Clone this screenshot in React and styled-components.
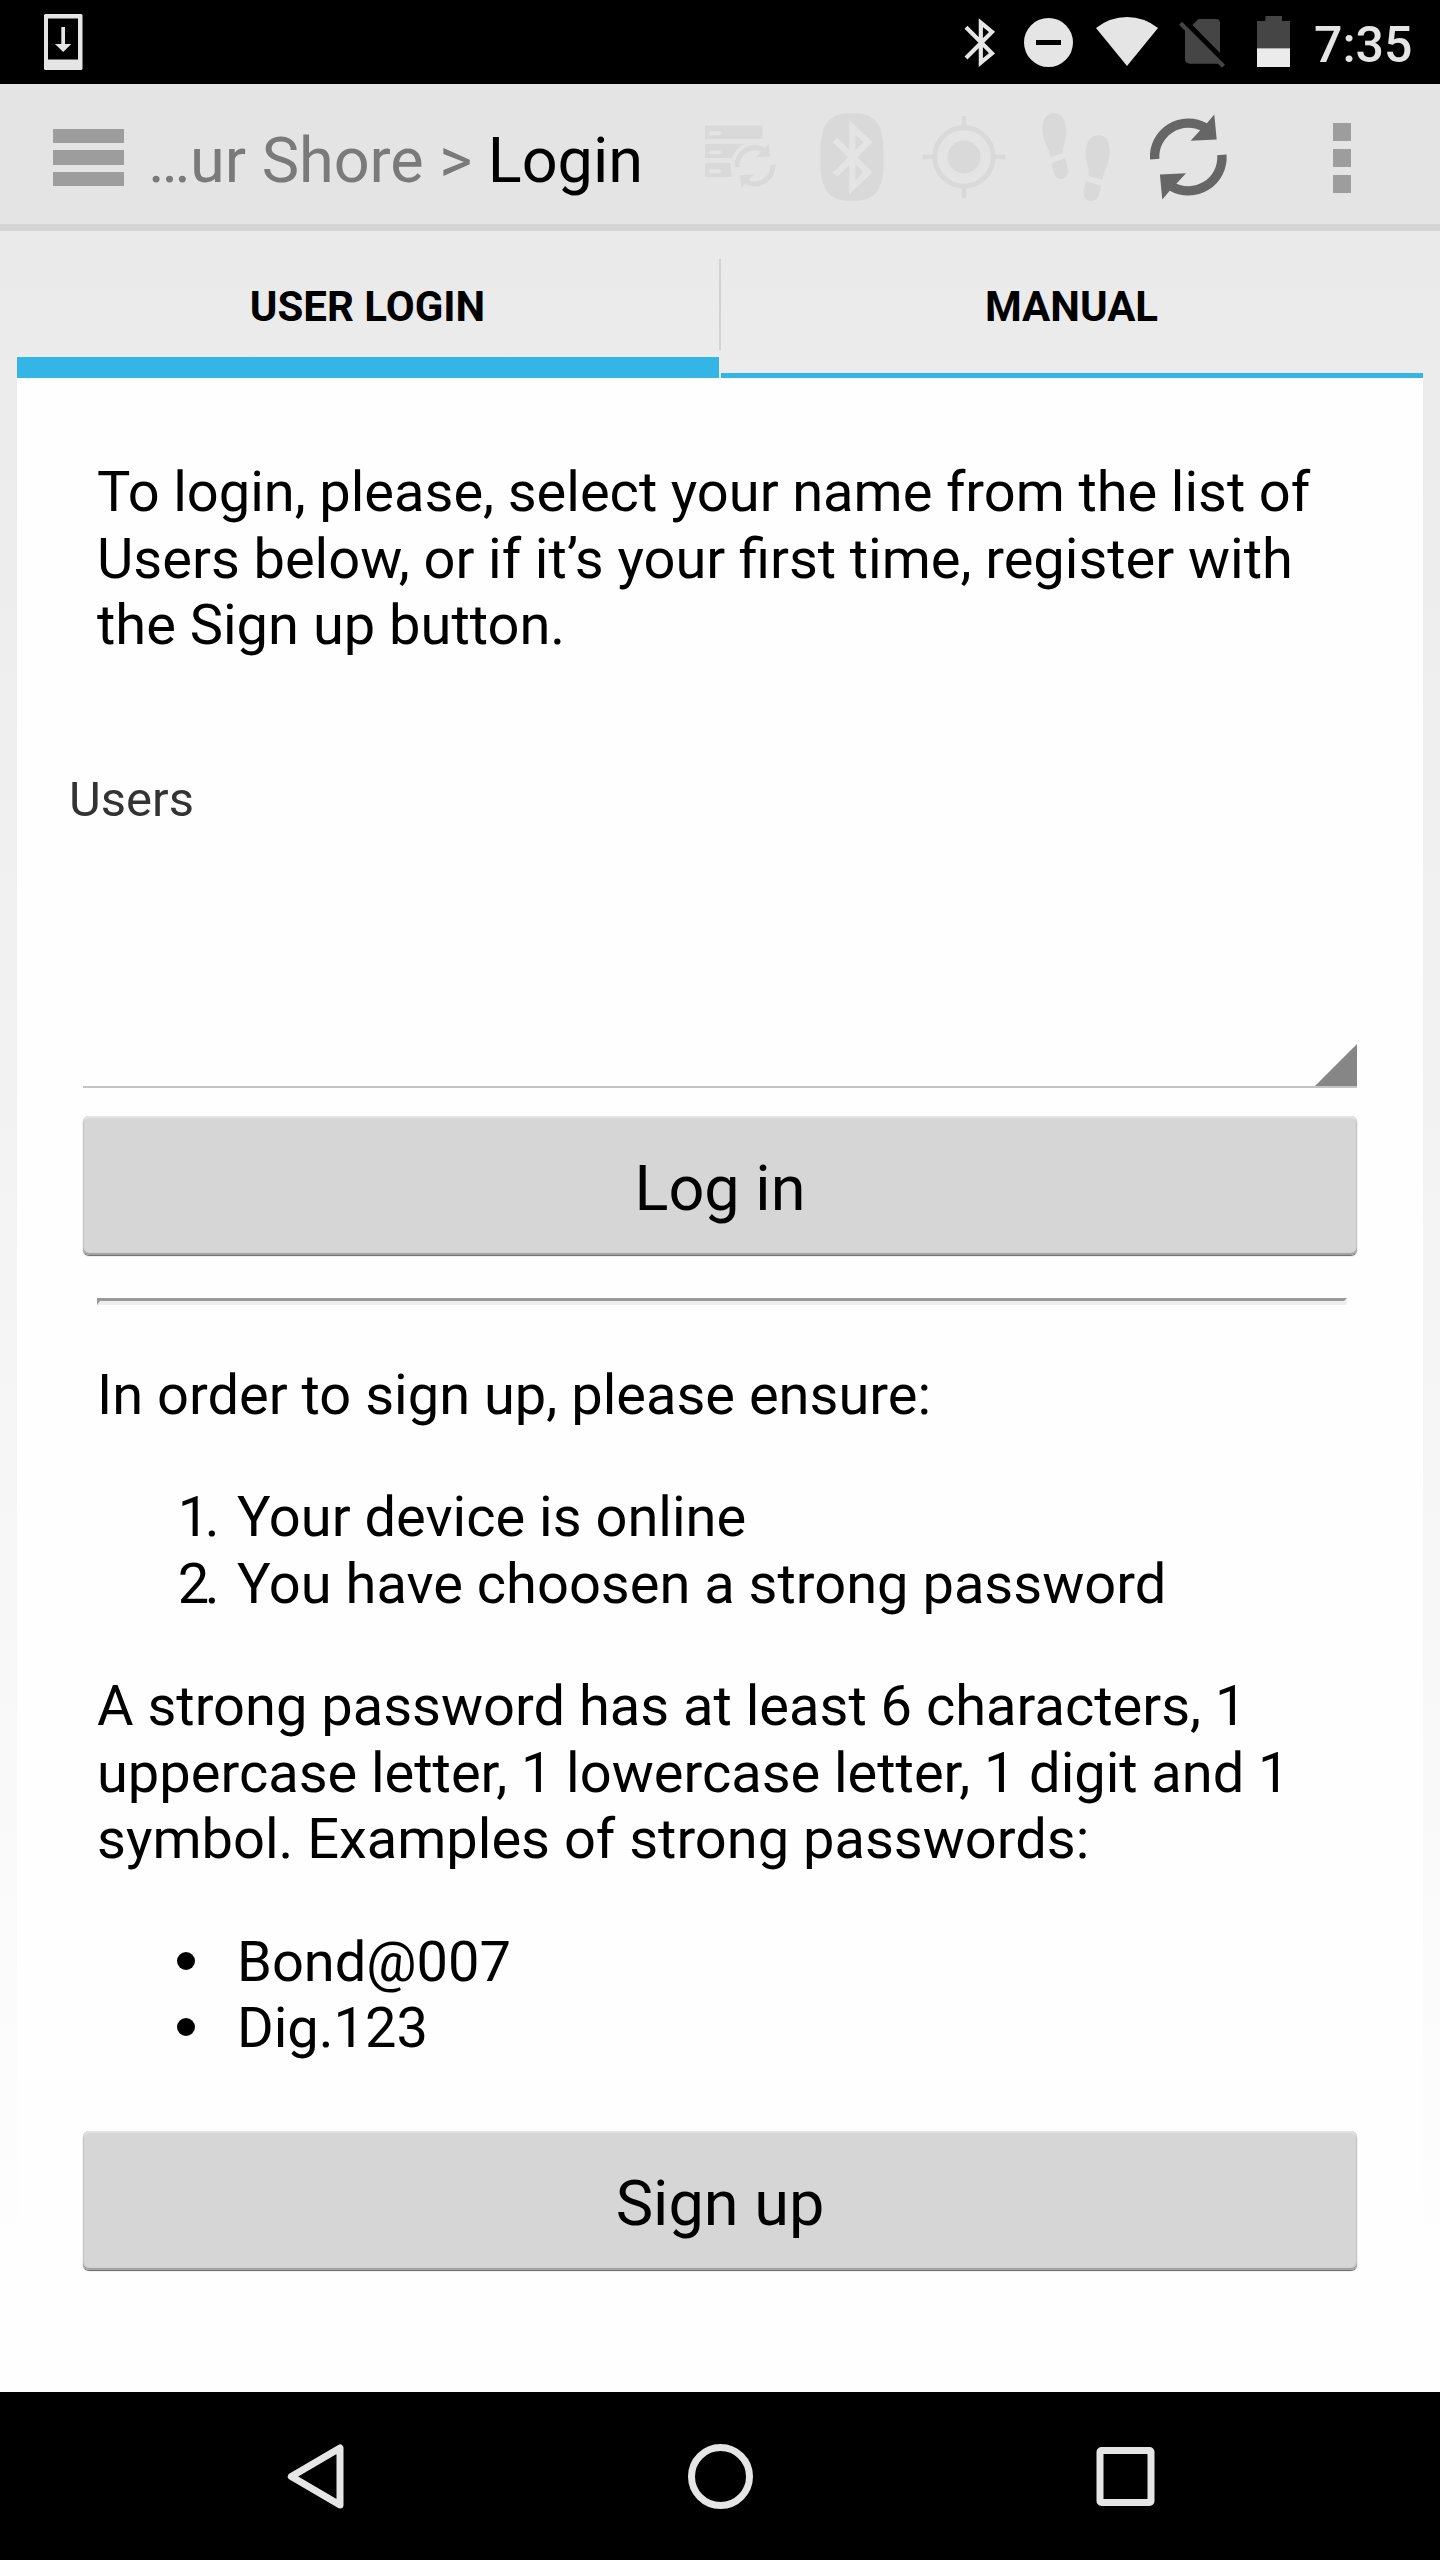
import React from 'react';
import styled, { createGlobalStyle } from 'styled-components';

const GlobalStyle = createGlobalStyle`
  * { box-sizing: border-box; }
  body { margin: 0; background: #000; font-family: Roboto, "Liberation Sans", sans-serif; }
`;

const Screen = styled.div`
  width: 1440px;
  height: 2560px;
  display: flex;
  flex-direction: column;
  overflow: hidden;
  color: #000;
`;

const StatusBar = styled.header`
  height: 84px;
  flex: none;
  display: flex;
  align-items: flex-start;
  background: #000;
`;

const Spacer = styled.div`
  flex: 1;
`;

const Glyph = styled.svg`
  display: block;
  flex: none;
  margin-left: ${(p) => p.$left || 0}px;
  margin-top: ${(p) => p.$top || 0}px;
`;

const Clock = styled.span`
  margin: 17px 28px 0 24px;
  width: 98px;
  font-size: 50px;
  line-height: 57px;
  font-weight: 500;
  color: #e5e5e5;
  white-space: nowrap;
`;

const AppBar = styled.nav`
  height: 147px;
  flex: none;
  display: flex;
  align-items: flex-start;
  background: #e4e4e4;
  border-bottom: 7px solid #d4d4d4;
`;

const MenuButton = styled.div`
  width: 71px;
  margin: 45px 0 0 53px;
  display: flex;
  flex-direction: column;
  gap: 7.2px;
`;

const MenuLine = styled.span`
  height: 14.3px;
  background: #9d9d9d;
`;

const Title = styled.h1`
  margin: 39px 0 0 24px;
  width: 556px;
  flex: none;
  font-size: 63px;
  line-height: 75px;
  font-weight: 400;
  letter-spacing: -0.04px;
  white-space: pre;
`;

const Crumb = styled.span`
  color: #7a7a7a;
`;

const Overflow = styled.div`
  width: 18px;
  margin: 39px 89px 0 0;
  display: flex;
  flex-direction: column;
  gap: 8.2px;
`;

const OverflowDot = styled.span`
  height: 18px;
  background: #9d9d9d;
`;

const Content = styled.main`
  flex: 1;
  min-height: 0;
  padding: 0 17px;
  display: flex;
  flex-direction: column;
  background: linear-gradient(#eaeaea 0, #fefefe 2060px);
`;

const Tabs = styled.div`
  height: 147px;
  flex: none;
  display: flex;
`;

const Tab = styled.div`
  flex: 1;
  padding: 46px 1px 0 0;
  text-align: center;
  font-size: 42px;
  line-height: 60px;
  font-weight: 700;
  border-bottom: ${(p) => (p.$active ? 21 : 5)}px solid #33b5e5;
`;

const TabDivider = styled.div`
  width: 2px;
  height: 91px;
  margin-top: 28px;
  background: #d2d2d2;
`;

const Panel = styled.section`
  flex: 1;
  background: #fefefe;
  padding: 81px 66px 0;
  display: flex;
  flex-direction: column;
`;

const Prose = styled.div`
  padding: 0 11px 0 14px;
  font-size: 56px;
  line-height: 66.5px;
`;

const Paragraph = styled.p`
  margin: 0;
  white-space: nowrap;
`;

const Line = styled.span`
  display: block;
  word-spacing: ${(p) => p.$gap || 0}px;
`;

const List = styled.ul`
  margin: 56px 0;
  padding: 0;
  list-style: none;
`;

const Item = styled.li`
  display: flex;
`;

const Marker = styled.span`
  width: 140px;
  flex: none;
  padding-right: 22px;
  text-align: right;
  letter-spacing: -4.5px;
`;

const Disc = styled.span`
  width: 18px;
  height: 18px;
  flex: none;
  margin: 23px 42px 0 80px;
  border-radius: 50%;
  background: #000;
`;

const Label = styled.label`
  margin: 112px 0 0 -14px;
  font-size: 49px;
  line-height: 57px;
  color: #333;
`;

const Spinner = styled.div`
  height: 260px;
  display: flex;
  justify-content: flex-end;
  align-items: flex-end;
  border-bottom: 2px solid #c3c3c3;
`;

const Button = styled.button`
  width: 100%;
  height: 139px;
  flex: none;
  margin: ${(p) => p.$top}px 0 0;
  padding: 8px 0 0;
  border: 0;
  border-radius: 6px;
  background: #d6d6d6;
  box-shadow: inset 0 2px 1px #e4e4e4, inset 0 -2px 1px #a0a0a0, inset 1px 0 1px #c4c4c4,
    inset -1px 0 1px #c4c4c4, 0 1px 1px #666;
  font: 400 63px/74px Roboto, "Liberation Sans", sans-serif;
  color: #000;
`;

const Rule = styled.hr`
  width: 1250px;
  height: 7px;
  flex: none;
  margin: 43px 0 57px 14px;
  border-style: solid;
  border-width: 3px 3px 4px;
  border-color: #9a9a9a #eee #eee #9a9a9a;
`;

const NavBar = styled.footer`
  height: 168px;
  flex: none;
  display: flex;
  align-items: flex-start;
  background: #000;
`;

const dim = '#d9d9d9';

const RefreshHalf = () => (
  <>
    <path d="M-33.6 2.2A33.6 33.6 0 0 1 17-29.2" fill="none" stroke="currentColor" strokeWidth="9.4" />
    <path d="M26-42.5L28.4-17.6L2.3-16.2L10.8-25.6L18.6-33.8Z" fill="currentColor" />
  </>
);

const Refresh = () => (
  <>
    <RefreshHalf />
    <g transform="rotate(180)">
      <RefreshHalf />
    </g>
  </>
);

export default function App() {
  return (
    <Screen>
      <GlobalStyle />
      <StatusBar>
        <Glyph $left={44} $top={14} width="39" height="56" viewBox="44 14 39 56">
          <path
            fill="#e5e5e5"
            fillRule="evenodd"
            d="M45 14H81.5L82.5 15V69L81.5 70H45L44 69V15ZM48 18.5V59.5H78V18.5Z"
          />
          <path fill="#e5e5e5" d="M61.3 27H65V44H71.3L63.2 52L55 44H61.3Z" />
        </Glyph>
        <Spacer />
        <Glyph $top={16} width="34" height="54" viewBox="70 48 102 162">
          <path
            fill="none"
            stroke="#e5e5e5"
            strokeWidth="12.5"
            d="M79 82L157 160L123.5 188V68L157 96L79 174"
          />
        </Glyph>
        <Glyph $left={27} $top={18} width="49" height="49" viewBox="252 54 147 147">
          <circle cx="325.5" cy="127.5" r="73.5" fill="#e5e5e5" />
          <rect x="288" y="120" width="75" height="15" />
        </Glyph>
        <Glyph $left={23} $top={17} width="62" height="50" viewBox="468 51 186 150">
          <path fill="#e5e5e5" d="M468 84Q510 51 561 51Q612 51 654 84L561 198Z" />
        </Glyph>
        <Glyph $left={21} $top={19} width="46" height="49" viewBox="717 57 138 147">
          <path
            fill="#454545"
            d="M775 57H828Q840 57 840 69V159L757 75ZM735 86L838 190Q836 191 833 191H750Q735 191 735 177ZM717 74L726 65L855 194L846 203Z"
          />
        </Glyph>
        <Glyph $left={32} $top={16} width="33" height="51" viewBox="951 48 99 153">
          <path fill="#454545" d="M976 48H1026V63H1050V146H951V63H976Z" />
          <rect x="951" y="145" width="99" height="56" fill="#ebebeb" />
        </Glyph>
        <Clock>7:35</Clock>
      </StatusBar>

      <AppBar>
        <MenuButton>
          <MenuLine />
          <MenuLine />
          <MenuLine />
        </MenuButton>
        <Title>
          <Crumb>…ur Shore &gt; </Crumb>Login
        </Title>
        <Glyph $top={40} width="72" height="66" viewBox="704 124 72 66">
          <path fill={dim} d="M705 125.5H762.5V139H705ZM705 144H762V158H705ZM705 163H731.5V177H705Z" />
          <g fill="#e4e4e4">
            <rect x="708.5" y="131.2" width="12.5" height="4" rx="2" />
            <rect x="708.5" y="150.2" width="12.5" height="4" rx="2" />
            <rect x="708.5" y="169.2" width="12.5" height="4" rx="2" />
            <circle cx="755" cy="166" r="24.5" />
          </g>
          <g transform="translate(755 165.8) scale(.53)" color={dim}>
            <Refresh />
          </g>
        </Glyph>
        <Glyph $left={44} $top={29} width="64" height="88" viewBox="820 113 64 88">
          <path
            fill={dim}
            d="M852 113C878 113 883.7 126 883.7 157S878 201 852 201S820.3 188 820.3 157S826 113 852 113Z"
          />
          <path
            fill="none"
            stroke="#e4e4e4"
            strokeWidth="6.2"
            d="M834.8 139.8L868 172.3L852.3 187.2V127.4L868 142.3L834.8 174.8"
          />
        </Glyph>
        <Glyph $left={38} $top={31} width="84" height="84" viewBox="922 115 84 84">
          <circle cx="964" cy="157" r="29.2" fill="none" stroke={dim} strokeWidth="5" />
          <circle cx="964" cy="157" r="16.4" fill={dim} />
          <path
            stroke={dim}
            strokeWidth="4.6"
            d="M964 115.7V126M964 188V198.3M922.8 157H933M995 157H1005.2"
          />
        </Glyph>
        <Glyph $left={36} $top={28} width="68" height="90" viewBox="306 336 204 270">
          <g fill={dim}>
            <path d="M332 471C326 441 307 424 307 387C307 359 320 339 343 339C366 339 379 364 379 396C379 425 367 434 369 459Z" />
            <path d="M335 490L374 475C378 489 384 499 384 513C384 528 376 537 364 537C344 537 339 520 335 490Z" />
            <path d="M446 528C450 502 437 493 437 462C437 431 450 405 475 405C499 405 509 427 509 455C509 492 493 508 487 539Z" />
            <path d="M438 543L483 558C479 584 474 603 454 603C439 603 431 592 431 578C431 563 435 557 438 543Z" />
          </g>
        </Glyph>
        <Glyph $left={39} $top={30} width="79" height="86" viewBox="-39.3 -43 79 86" color="#666">
          <Refresh />
        </Glyph>
        <Spacer />
        <Overflow>
          <OverflowDot />
          <OverflowDot />
          <OverflowDot />
        </Overflow>
      </AppBar>

      <Content>
        <Tabs>
          <Tab $active>USER LOGIN</Tab>
          <TabDivider />
          <Tab>MANUAL</Tab>
        </Tabs>
        <Panel>
          <Prose>
            <Paragraph>
              <Line $gap={-0.35}>To login, please, select your name from the list of</Line>
              <Line $gap={-0.25}>Users below, or if it’s your first time, register with</Line>
              <Line>the Sign up button.</Line>
            </Paragraph>
          </Prose>
          <Label>Users</Label>
          <Spinner>
            <svg width="42" height="42" viewBox="0 0 42 42">
              <path fill="#868686" d="M42 0V42H0Z" />
            </svg>
          </Spinner>
          <Button $top={28}>Log in</Button>
          <Rule />
          <Prose>
            <Paragraph>In order to sign up, please ensure:</Paragraph>
            <List as="ol">
              <Item>
                <Marker>1.</Marker>Your device is online
              </Item>
              <Item>
                <Marker>2.</Marker>You have choosen a strong password
              </Item>
            </List>
            <Paragraph>
              <Line>A strong password has at least 6 characters, 1</Line>
              <Line $gap={-0.2}>uppercase letter, 1 lowercase letter, 1 digit and 1</Line>
              <Line>symbol. Examples of strong passwords:</Line>
            </Paragraph>
            <List>
              <Item>
                <Disc />
                Bond@007
              </Item>
              <Item>
                <Disc />
                Dig.123
              </Item>
            </List>
          </Prose>
          <Button $top={13}>Sign up</Button>
        </Panel>
      </Content>

      <NavBar>
        <Glyph $left={286} $top={50} width="60" height="70" viewBox="286 2442 60 70">
          <path
            fill="none"
            stroke="#e5e5e5"
            strokeWidth="7"
            strokeLinejoin="round"
            d="M291.3 2476.5L340 2448V2505Z"
          />
        </Glyph>
        <Glyph $left={341} $top={50} width="68" height="70" viewBox="687 2442 68 70">
          <circle cx="720.5" cy="2476.5" r="29" fill="none" stroke="#e5e5e5" strokeWidth="7" />
        </Glyph>
        <Glyph $left={340} $top={50} width="62" height="70" viewBox="1095 2442 62 70">
          <rect
            x="1100"
            y="2450.5"
            width="51"
            height="52"
            rx="1.5"
            fill="none"
            stroke="#e5e5e5"
            strokeWidth="7"
          />
        </Glyph>
      </NavBar>
    </Screen>
  );
}
